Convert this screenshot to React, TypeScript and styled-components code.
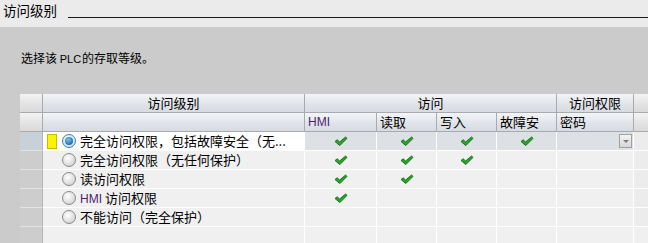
import React from "react";
import styled, { createGlobalStyle } from "styled-components";

const Global = createGlobalStyle`
  html, body { margin: 0; padding: 0; }
  body {
    width: 648px;
    height: 243px;
    overflow: hidden;
    background: #cbcbcb;
    font-family: "Noto Sans CJK SC", "Noto Sans", sans-serif;
    font-size: 12px;
    color: #000;
  }
`;

const TitleBar = styled.div`
  height: 27px;
  background: #ebebeb;
  display: flex;
  align-items: flex-start;
  padding: 1px 0 0 3px;
  box-sizing: border-box;
  .ttl {
    font-size: 13.5px;
    line-height: 18px;
    margin-right: 11px;
  }
  .rule {
    flex: 1;
    height: 1px;
    margin-top: 16px;
    background: #1a1a1a;
  }
`;

const Panel = styled.div`
  padding: 23px 0 0 21px;
  .desc {
    line-height: 16px;
    height: 16px;
  }
  .latin {
    font-family: "Liberation Sans", sans-serif;
    font-size: 11px;
    margin-right: 1px;
  }
`;

const Grid = styled.div`
  margin: 28px 0 0 20px;
  display: grid;
  grid-template-columns: 23px 262px 72px 60px 60px 60px 77px 30px;
  grid-auto-rows: 19px;
  width: 644px;
  height: 149px;
  overflow: hidden;
  font-size: 13px;
`;

const Head = styled.div<{ $span?: number; $left?: boolean }>`
  grid-column: span ${(p) => p.$span || 1};
  background: linear-gradient(#f3f5f7, #dfe3e8 60%, #d8dce2);
  border-right: 1px solid #a7abb0;
  border-bottom: 1px solid #a7abb0;
  box-sizing: border-box;
  display: flex;
  align-items: center;
  justify-content: ${(p) => (p.$left ? "flex-start" : "center")};
  padding-left: ${(p) => (p.$left ? "3px" : "0")};
  line-height: 16px;
  white-space: nowrap;
  overflow: hidden;
`;

const Corner = styled.div`
  background: linear-gradient(#f4f4f4, #e2e2e2 60%, #dadada);
  border-right: 1px solid #a7abb0;
  border-bottom: 1px solid #a7abb0;
  box-sizing: border-box;
`;

const RowHead = styled.div<{ $sel?: boolean }>`
  background: ${(p) => (p.$sel ? "#c8d0d8" : "#cdcdcd")};
  border-right: 1px solid #b5b5b5;
  border-bottom: 1px solid #e4e4e4;
  box-sizing: border-box;
`;

const Cell = styled.div<{ $sel?: boolean; $end?: boolean }>`
  background: ${(p) => (p.$end ? "#ececec" : p.$sel ? "#dde1e5" : "#f0f0f0")};
  border-right: 1px solid #fff;
  border-bottom: 1px solid #fff;
  box-sizing: border-box;
  display: flex;
  align-items: center;
  justify-content: center;
  position: relative;
`;

const NameCell = styled(Cell)`
  justify-content: flex-start;
  padding-left: 4px;
  white-space: nowrap;
  overflow: hidden;
  background: ${(p) => (p.$sel ? "#ffffff" : "#f0f0f0")};
`;

const Label = styled.span`
  line-height: 16px;
`;

const Marker = styled.span<{ $on?: boolean }>`
  width: 10px;
  height: 15px;
  margin-right: 5px;
  background: ${(p) => (p.$on ? "#fff200" : "transparent")};
  border: 1px solid ${(p) => (p.$on ? "#c9b900" : "transparent")};
  box-sizing: border-box;
  flex: none;
`;

const Radio = styled.span<{ $on?: boolean }>`
  width: 14px;
  height: 14px;
  border-radius: 50%;
  border: 1px solid #8a8a8a;
  box-sizing: border-box;
  margin-right: 4px;
  flex: none;
  background: radial-gradient(circle at 40% 35%, #ffffff, #dedede 60%, #c2c2c2);
  display: flex;
  align-items: center;
  justify-content: center;
  ${(p) =>
    p.$on &&
    `
    border-color: #3c7fb1;
    background: radial-gradient(circle at 45% 40%, #ffffff, #cfe4f3 70%, #9ac3e0);
    &::after {
      content: "";
      width: 8px;
      height: 8px;
      border-radius: 50%;
      background: radial-gradient(circle at 40% 35%, #7dc1f0, #1f6fb8 70%, #0b4c8a);
    }
  `}
`;

const Purple = styled.span`
  color: #4e1d6b;
  font-family: "Liberation Sans", sans-serif;
  font-size: 12px;
  margin-right: 3px;
`;

const Drop = styled.span`
  position: absolute;
  right: 1px;
  top: 2px;
  width: 13px;
  height: 14px;
  box-sizing: border-box;
  border: 1px solid #a0a0a0;
  background: linear-gradient(#f4f4f4, #d6d6d6);
  display: flex;
  align-items: center;
  justify-content: center;
  &::after {
    content: "";
    border-left: 3px solid transparent;
    border-right: 3px solid transparent;
    border-top: 3px solid #7a7a7a;
  }
`;

const Check = () => (
  <svg width="14" height="11" viewBox="0 0 14 11">
    <path
      d="M1 5.5 L3.2 3.8 L5.6 6 L11.6 1 L13 2.4 L5.8 9.6 Z"
      fill="#2aa52a"
      stroke="#0f6a12"
      strokeWidth="0.9"
      strokeLinejoin="round"
    />
  </svg>
);

type Row = { label: React.ReactNode; checks: boolean[]; sel?: boolean };

const rows: Row[] = [
  { label: "完全访问权限，包括故障安全（无...", checks: [true, true, true, true], sel: true },
  { label: "完全访问权限（无任何保护）", checks: [true, true, true, false] },
  { label: "读访问权限", checks: [true, true, false, false] },
  { label: <><Purple>HMI</Purple>访问权限</>, checks: [true, false, false, false] },
  { label: "不能访问（完全保护）", checks: [false, false, false, false] },
];

export default function App() {
  return (
    <>
      <Global />
      <TitleBar>
        <span className="ttl">访问级别</span>
        <span className="rule" />
      </TitleBar>
      <Panel>
        <div className="desc">
          选择该 <span className="latin">PLC</span>的存取等级。
        </div>
      </Panel>
      <Grid>
        <Corner />
        <Head>访问级别</Head>
        <Head $span={4}>访问</Head>
        <Head>访问权限</Head>
        <Corner />

        <Corner />
        <Head />
        <Head $left>
          <Purple>HMI</Purple>
        </Head>
        <Head $left>读取</Head>
        <Head $left>写入</Head>
        <Head $left>故障安</Head>
        <Head $left>密码</Head>
        <Corner />

        {rows.map((r, i) => (
          <React.Fragment key={i}>
            <RowHead $sel={r.sel} />
            <NameCell $sel={r.sel}>
              <Marker $on={r.sel} />
              <Radio $on={r.sel} />
              <Label>{r.label}</Label>
            </NameCell>
            {r.checks.map((c, j) => (
              <Cell key={j} $sel={r.sel}>
                {c && <Check />}
              </Cell>
            ))}
            <Cell $sel={r.sel}>{r.sel && <Drop />}</Cell>
            <Cell $end />
          </React.Fragment>
        ))}
        <RowHead />
        <Cell />
        <Cell />
        <Cell />
        <Cell />
        <Cell />
        <Cell />
        <Cell />
        <Cell $end />
      </Grid>
    </>
  );
}
